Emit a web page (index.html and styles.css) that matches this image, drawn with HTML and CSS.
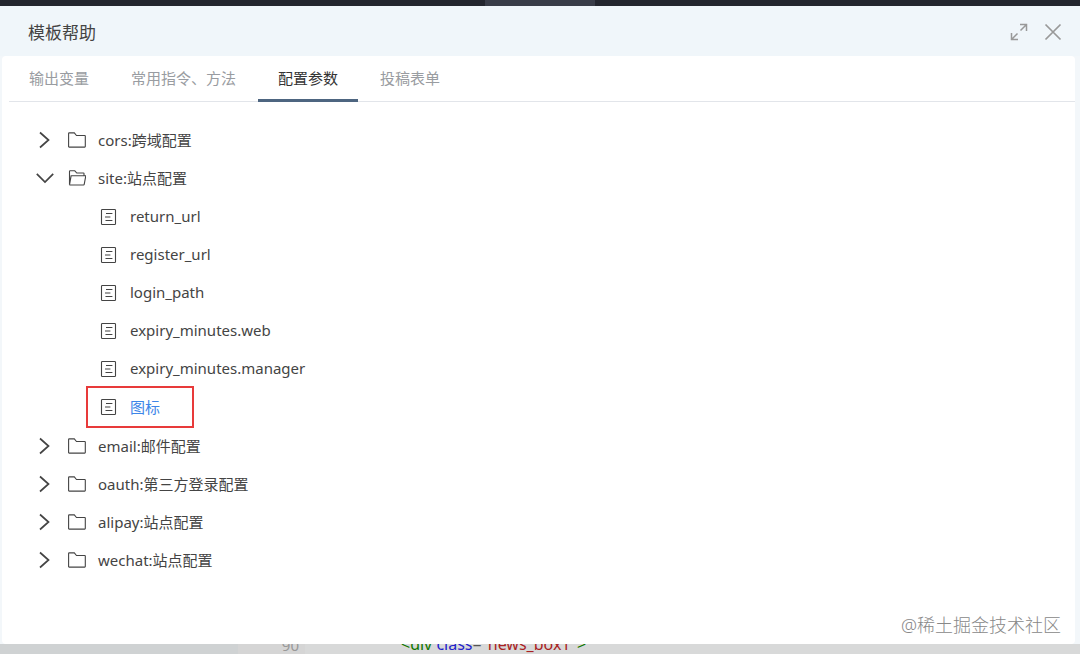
FILE: index.html
```html
<!DOCTYPE html>
<html lang="zh-CN">
<head>
    <meta charset="UTF-8">
    <meta name="viewport" content="width=device-width, initial-scale=1.0">
    <title>模板帮助</title>
    <link rel="stylesheet" href="styles.css">
</head>
<body>
    <!-- shared icons -->
    <svg class="sprite" aria-hidden="true">
        <symbol id="right" viewBox="0 0 18 18"><path d="M4 1.500l8.500 7.500L4 16.500" stroke-width="1.7"/></symbol>
        <symbol id="down" viewBox="0 0 18 18"><path d="M.8 4.800L9 13l8.200-8.200" stroke-width="1.7"/></symbol>
        <symbol id="folder" viewBox="0 0 18 18"><path d="M.6 15.500v-13q0-.6.6-.6h5.100l2.200 2.600h8.200q.6 0 .6.6v10.400q0 .6-.6.6H1.200q-.6 0-.6-.6z"/></symbol>
        <symbol id="folder-open" viewBox="0 0 18 18"><path d="M1.500 15.800V2.400q0-.6.6-.6h4.700l2 2.200h6.600q.6 0 .6.6v2.200M1.500 15.800L3.100 6.800h14.700l-1.600 8.600q-.1.6-.7.6H2q-.5 0-.5-.6"/></symbol>
        <symbol id="doc" viewBox="0 0 18 18"><rect x="1.500" y="1.500" width="14" height="15" rx=".8"/><path d="M6 5.500h6.400M5 9h5.400M5.500 12.500h6.900"/></symbol>
    </svg>

    <div class="topbar"><span class="topbar-tab"></span></div>

    <main class="dialog">
        <header class="dialog-header">
            <h1 class="title">模板帮助</h1>
            <button class="tool" aria-label="最大化">
                <svg class="icon" viewBox="0 0 18 18"><path d="M10.500 7.500l6-6M10 1.500h6.500V8M7.500 10.500l-6 6M1.500 10v6.500H8" stroke-width="1.5"/></svg>
            </button>
            <button class="tool" aria-label="关闭">
                <svg class="icon" viewBox="0 0 18 18"><path d="M1.500 1.500l15 15M16.500 1.500l-15 15" stroke-width="1.7"/></svg>
            </button>
        </header>

        <div class="dialog-body">
            <nav class="tabs">
                <button class="tab">输出变量</button>
                <button class="tab">常用指令、方法</button>
                <button class="tab active">配置参数</button>
                <button class="tab">投稿表单</button>
            </nav>

            <ul class="tree">
                <li><button class="branch"><svg class="icon"><use href="#right"/></svg><svg class="icon folder"><use href="#folder"/></svg><span class="label">cors:跨域配置</span></button></li>
                <li>
                    <button class="branch" aria-expanded="true"><svg class="icon"><use href="#down"/></svg><svg class="icon folder"><use href="#folder-open"/></svg><span class="label">site:站点配置</span></button>
                    <ul class="leaves">
                        <li><a class="leaf" href="#"><svg class="icon"><use href="#doc"/></svg><span class="label">return_url</span></a></li>
                        <li><a class="leaf" href="#"><svg class="icon"><use href="#doc"/></svg><span class="label">register_url</span></a></li>
                        <li><a class="leaf" href="#"><svg class="icon"><use href="#doc"/></svg><span class="label">login_path</span></a></li>
                        <li><a class="leaf" href="#"><svg class="icon"><use href="#doc"/></svg><span class="label">expiry_minutes.web</span></a></li>
                        <li><a class="leaf" href="#"><svg class="icon"><use href="#doc"/></svg><span class="label">expiry_minutes.manager</span></a></li>
                        <li><a class="leaf marked" href="#"><svg class="icon"><use href="#doc"/></svg><span class="label current">图标</span></a></li>
                    </ul>
                </li>
                <li><button class="branch"><svg class="icon"><use href="#right"/></svg><svg class="icon folder"><use href="#folder"/></svg><span class="label">email:邮件配置</span></button></li>
                <li><button class="branch"><svg class="icon"><use href="#right"/></svg><svg class="icon folder"><use href="#folder"/></svg><span class="label">oauth:第三方登录配置</span></button></li>
                <li><button class="branch"><svg class="icon"><use href="#right"/></svg><svg class="icon folder"><use href="#folder"/></svg><span class="label">alipay:站点配置</span></button></li>
                <li><button class="branch"><svg class="icon"><use href="#right"/></svg><svg class="icon folder"><use href="#folder"/></svg><span class="label">wechat:站点配置</span></button></li>
            </ul>

            <p class="watermark">@稀土掘金技术社区</p>
        </div>
    </main>

    <!-- editor behind the dialog -->
    <div class="editor">
        <div class="sidebar"></div>
        <div class="line-number">90</div>
        <div class="line"><code class="code"><span class="tag">&lt;div</span> <span class="attr">class</span>=<span class="string">"news_box1"</span><span class="tag">&gt;</span></code></div>
    </div>
</body>
</html>
```

FILE: styles.css
```css
* {
    box-sizing: border-box;
}

body {
    margin: 0;
    display: flex;
    flex-direction: column;
    min-height: 100vh;
    font-family: "Noto Sans", "Noto Sans CJK SC", sans-serif;
    font-size: 15px;
    color: #444;
    background: #d8d9d9;
}

button {
    border: none;
    background: none;
    padding: 0;
    font: inherit;
    color: inherit;
    cursor: pointer;
}

ul {
    list-style: none;
    margin: 0;
    padding: 0;
}

.sprite {
    display: none;
}

.icon {
    width: 18px;
    height: 18px;
    flex: none;
    fill: none;
    stroke: #444;
    stroke-width: 1.1;
}

.topbar {
    height: 6px;
    display: flex;
    justify-content: center;
    background: #23262e;
}

.topbar-tab {
    width: 110px;
    background: #393d48;
}

.dialog {
    flex: 1;
    display: flex;
    flex-direction: column;
    background: #f3f7fa;
}

.dialog-header {
    height: 50px;
    display: flex;
    align-items: center;
    gap: 16px;
    padding: 2px 18px 0 28px;
    background: #f0f6fa;
}

.title {
    flex: 1;
    margin: 0;
    padding-bottom: 2px;
    font-size: 17px;
    font-weight: normal;
}

.tool {
    display: flex;
}

.tool .icon {
    stroke: #999;
}

.dialog-body {
    flex: 1;
    display: flex;
    flex-direction: column;
    margin: 0 5px 0 2px;
    border-radius: 4px;
    background: #fff;
}

.tabs {
    display: flex;
    gap: 2px;
    height: 46px;
    margin-left: 7px;
    border-bottom: 1px solid #e2e5ea;
}

.tab {
    height: 46px;
    padding: 0 20px;
    border-bottom: 3px solid transparent;
    color: #999ca1;
}

.tab.active {
    color: #333;
    border-bottom-color: #4d6580;
}

.tree {
    padding: 19px 0 0 34px;
}

.branch,
.leaf {
    display: flex;
    align-items: center;
    height: 38px;
}

.branch .folder {
    margin: 0 12px 0 14px;
}

.label {
    padding-bottom: 2px;
}

.leaves {
    margin: 1px 0;
    padding-left: 52px;
}

.leaf {
    width: max-content;
    gap: 12px;
    padding: 0 32px 0 12px;
    color: inherit;
    text-decoration: none;
}

.marked {
    outline: 2px solid #e83a3a;
}

.current {
    color: #3d86e8;
}

.watermark {
    margin: auto 14px 6px;
    font-size: 18px;
    line-height: 26px;
    text-align: right;
    font-weight: 300;
    color: #888;
}

.editor {
    display: flex;
    height: 10px;
    overflow: hidden;
    line-height: 18px;
}

.sidebar {
    width: 238px;
    background: #cfd2d3;
}

.line-number,
.line {
    display: flex;
    align-items: flex-end;
}

.line-number {
    width: 67px;
    padding-right: 6px;
    justify-content: flex-end;
    color: #999;
    background: #d5d5d5;
}

.code {
    padding: 0 0 1px 96px;
    font-family: "Noto Sans", sans-serif;
    font-size: 16px;
    white-space: pre;
    color: #555;
}

.tag {
    color: #170;
}

.attr {
    color: #22c;
}

.string {
    color: #a22;
}
```
